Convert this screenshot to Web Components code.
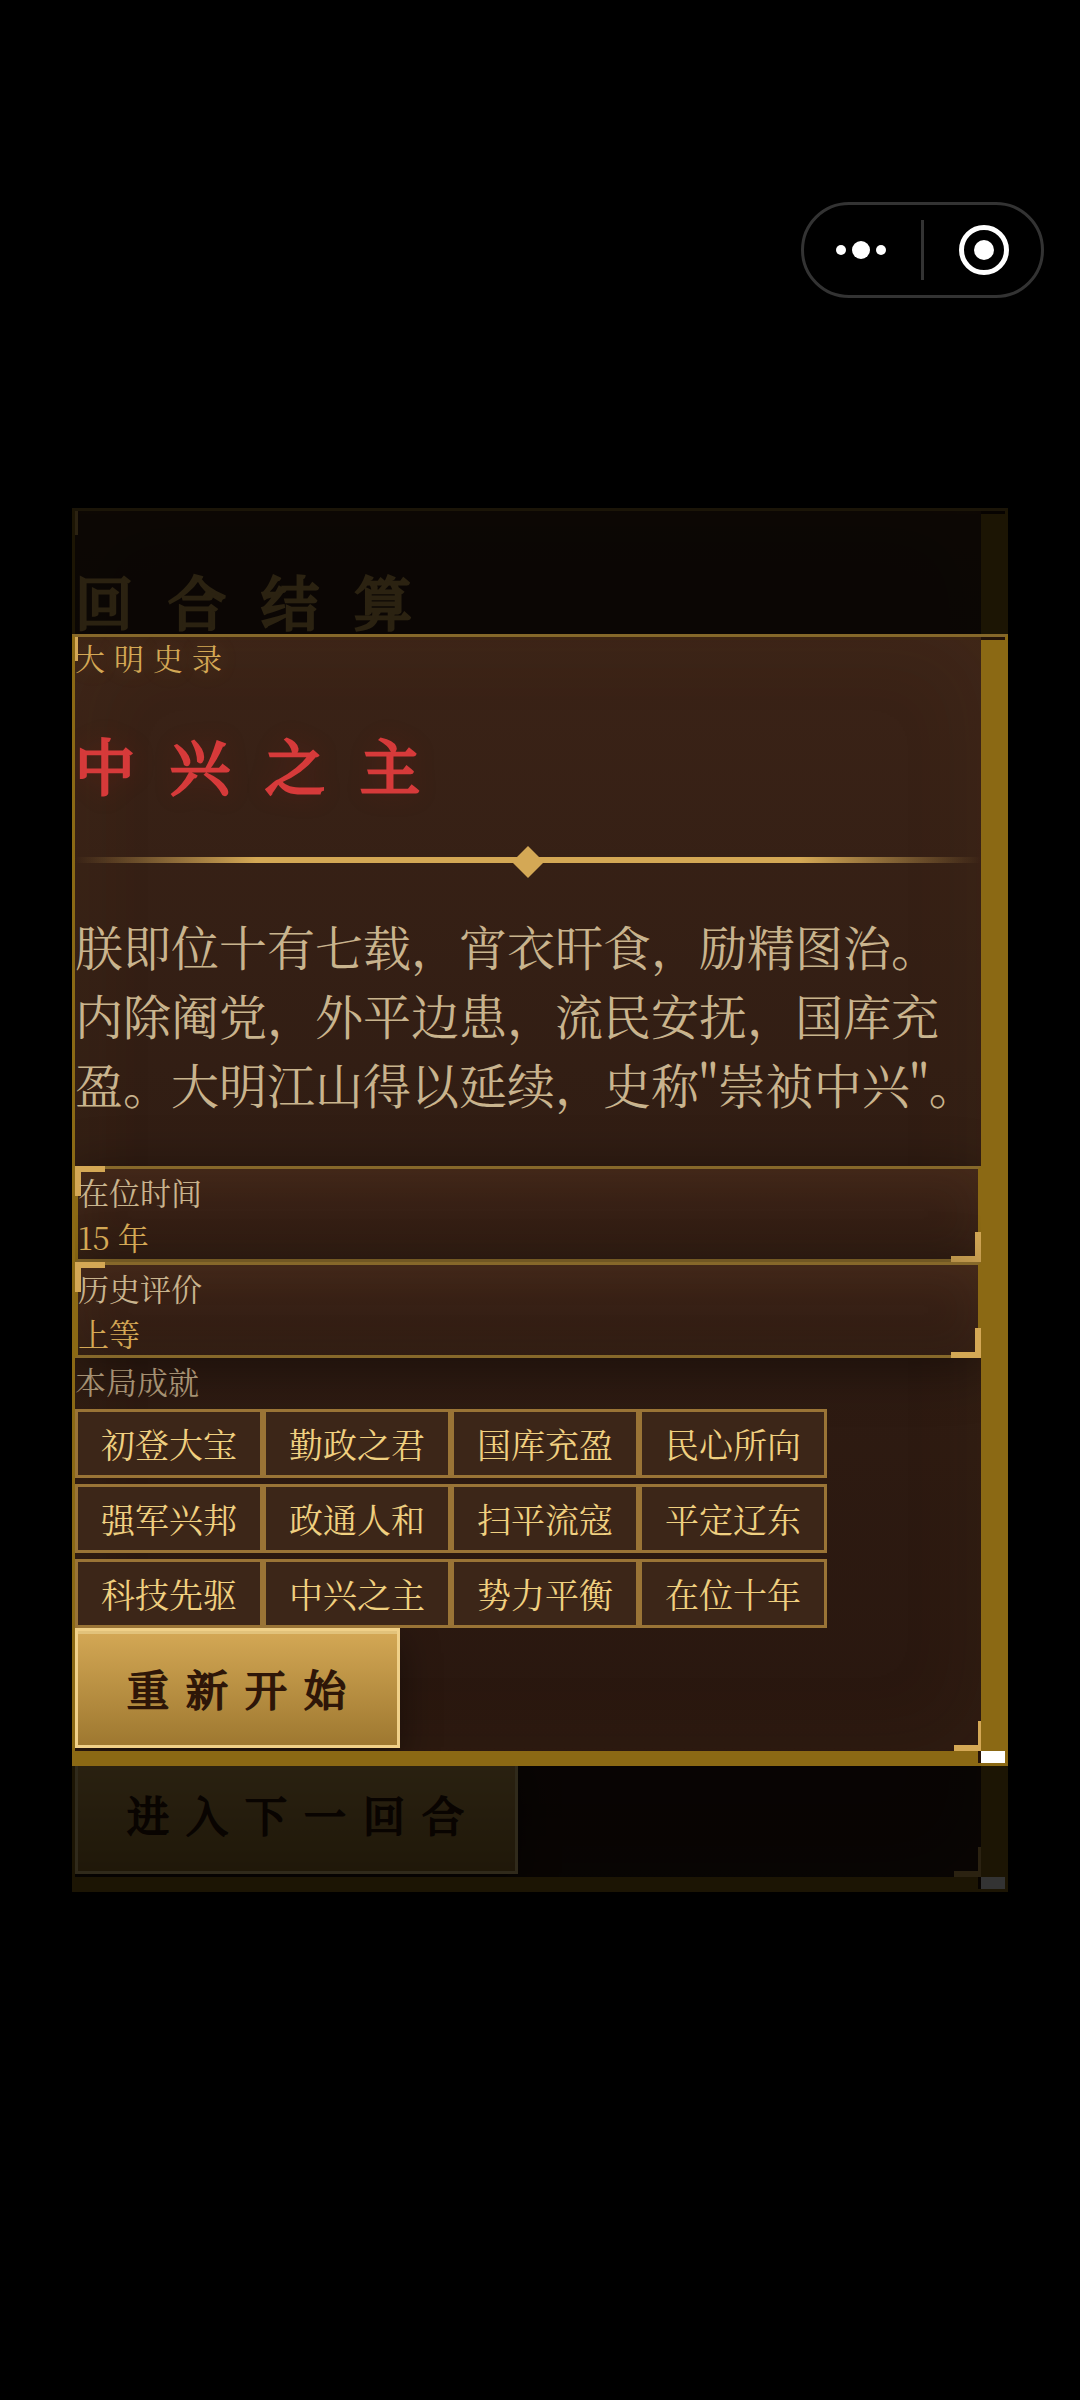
<!DOCTYPE html>
<html lang="zh-CN">
<head>
<meta charset="utf-8">
<meta name="viewport" content="width=device-width, initial-scale=1">
<title>大明史录</title>
<style>
  html { background: #000; }
  body {
    margin: 0;
    min-height: 100vh;
    background: #000;
    color: #c9b48e;
    font-family: "Noto Serif CJK SC", "Noto Serif SC", "Source Han Serif SC", "Noto Sans CJK SC", serif;
    font-weight: 400;
    --gold: #d4a855;
    --gold-light: #f0d080;
    --gold-dark: #8b6914;
  }
</style>
</head>
<body>
<host-capsule></host-capsule>

<modal-layer>
  <scroll-panel>
    <panel-title tone="plain">回合结算</panel-title>
    <ledger-body><gold-divider></gold-divider></ledger-body>
    <gold-button>进入下一回合</gold-button>
  </scroll-panel>
</modal-layer>

<modal-layer>
  <scroll-panel>
    <panel-eyebrow>大明史录</panel-eyebrow>
    <panel-title tone="red">中兴之主</panel-title>
    <gold-divider></gold-divider>
    <history-text>朕即位十有七载，宵衣旰食，励精图治。内除阉党，外平边患，流民安抚，国库充盈。大明江山得以延续，史称"崇祯中兴"。</history-text>
    <stat-card label="在位时间">15 年</stat-card>
    <stat-card label="历史评价">上等</stat-card>
    <achievement-list label="本局成就" items="初登大宝,勤政之君,国库充盈,民心所向,强军兴邦,政通人和,扫平流寇,平定辽东,科技先驱,中兴之主,势力平衡,在位十年"></achievement-list>
    <gold-button>重新开始</gold-button>
  </scroll-panel>
</modal-layer>

<script>
const define = (name, render) => customElements.define(name, class extends HTMLElement {
  connectedCallback() {
    if (this.shadowRoot) return;
    this.attachShadow({ mode: 'open' }).innerHTML = render(this);
  }
});

define('host-capsule', () => `
  <style>
    :host { display: flex; justify-content: flex-end; padding: 202px 36px 0; position: relative; z-index: 10; }
    nav { display: flex; align-items: center; box-sizing: border-box; width: 243px; height: 96px; border: 3px solid #333; border-radius: 48px; background: #000; }
    button { flex: 1; display: flex; align-items: center; justify-content: center; height: 90px; padding: 0 3px 0 0; border: 0; background: none; }
    i + button { padding: 0 0 0 3px; }
    i { width: 3px; height: 60px; background: #333; }
    svg { display: block; fill: #fff; }
  </style>
  <nav>
    <button aria-label="更多"><svg width="50" height="18" viewBox="0 0 50 18"><circle cx="5" cy="9" r="5"/><circle cx="25" cy="9" r="9"/><circle cx="45" cy="9" r="5"/></svg></button>
    <i></i>
    <button aria-label="关闭"><svg width="50" height="50" viewBox="0 0 50 50"><circle cx="25" cy="25" r="22.5" fill="none" stroke="#fff" stroke-width="5"/><circle cx="25" cy="25" r="10"/></svg></button>
  </nav>`);

define('modal-layer', () => `
  <style>
    :host { position: fixed; inset: 0; display: flex; align-items: center; justify-content: center; padding: 0 72px; background: rgba(0,0,0,.8); }
    ::slotted(*) { flex: 1; min-width: 0; }
  </style>
  <slot></slot>`);

define('scroll-panel', () => `
  <style>
    :host { display: block; }
    section { display: grid; grid-template-columns: 1fr 24px; grid-template-rows: auto 12px; border: 3px solid var(--gold-dark); border-top-color: #86682a; background: #241309; }
    .body { position: relative; display: flex; flex-direction: column; align-items: stretch; min-width: 0; padding-bottom: 3px; overflow: hidden;
      background: linear-gradient(180deg, rgba(59,35,23,.98), rgba(50,30,20,.98) 40%, rgba(41,23,15,.98)); box-shadow: inset 0 0 90px rgba(139,100,50,.08), inset 0 3px 0 rgba(62,38,20,.8); }
    .body::before { content: ""; position: absolute; left: 0; top: 0; width: 3px; height: 24px; background: var(--gold); }
    .body::after { content: ""; position: absolute; right: 0; bottom: 0; width: 24px; height: 24px; border: solid var(--gold); border-width: 0 3px 6px 0; }
    .v { margin-top: 3px; background: var(--gold-dark); }
    .h { margin-right: 3px; background: var(--gold-dark); }
    .c { background: #fff; }
  </style>
  <section role="dialog">
    <div class="body"><slot></slot></div><div class="v"></div>
    <div class="h"></div><div class="c"></div>
  </section>`);

define('panel-eyebrow', () => `
  <style>:host { display: block; font-size: 30px; line-height: 40px; padding-bottom: 3px; letter-spacing: 9px; color: var(--gold); text-shadow: 0 0 24px rgba(212,168,85,.2); }</style>
  <slot></slot>`);

define('panel-title', el => `
  <style>
    :host { display: block; }
    h2 { margin: 49px 0 58px; font-size: 58px; line-height: 70px; letter-spacing: 35px; font-weight: 400; color: var(--gold); -webkit-text-stroke: 3px currentColor; }
    h2.plain { margin-top: 54px; }
    h2.red { font-size: 60px; color: #d63a3a; text-shadow: 0 0 24px rgba(196,30,30,.35); }
  </style>
  <h2 class="${el.getAttribute('tone') || ''}"><slot></slot></h2>`);

define('ledger-body', () => `
  <style>
    :host { display: block; box-sizing: border-box; height: 1061px; padding-top: 78px; }
  </style>
  <slot></slot>`);

define('gold-divider', () => `
  <style>
    :host { display: flex; justify-content: center; align-items: center; height: 6px; background: linear-gradient(90deg, transparent, var(--gold) 20%, var(--gold) 80%, transparent); }
    svg { flex: none; display: block; fill: var(--gold); margin-top: 4px; }
  </style>
  <svg width="32" height="32" viewBox="0 0 32 32"><path d="M16 0 32 16 16 32 0 16z"/></svg>`);

define('history-text', () => `
  <style>
    :host { display: block; margin: 48px 0; }
    p { margin: 0; font-size: 48px; line-height: 69px; color: #c9b48e; }
  </style>
  <p><slot></slot></p>`);

define('stat-card', el => `
  <style>
    :host { display: block; position: relative; border: 3px solid var(--gold-dark); border-top-color: #86682a; border-bottom-color: #86682a;
      background: linear-gradient(180deg, #3f2518, #2e1b12); box-shadow: 0 9px 54px rgba(0,0,0,.45), inset 0 0 45px rgba(139,100,50,.1); }
    :host::before, :host::after { content: ""; position: absolute; width: 24px; height: 24px; border: solid var(--gold); }
    :host::before { left: -3px; top: -3px; border-width: 6px 0 0 6px; }
    :host::after { right: -3px; bottom: -3px; border-width: 0 6px 6px 0; }
    dl { margin: 0; font-size: 31px; line-height: 45px; position: relative; z-index: 1; }
    dt { color: #c9b48e; }
    dd { margin: 0; color: var(--gold); }
  </style>
  <dl><dt>${el.getAttribute('label')}</dt><dd><slot></slot></dd></dl>`);

define('achievement-list', el => `
  <style>
    :host { display: block; position: relative; }
    h3 { margin: 0 0 6px; font-size: 31px; line-height: 45px; font-weight: inherit; color: #a59173; }
    ul { display: flex; flex-wrap: wrap; row-gap: 6px; margin: 0 140px 0 0; padding: 0; list-style: none; }
    li { box-sizing: border-box; height: 69px; padding: 0 23px; border: 3px solid #9a7436; background: #3c2618; font-size: 34px; line-height: 63px; color: var(--gold-light); }
  </style>
  <h3>${el.getAttribute('label')}</h3>
  <ul>${el.getAttribute('items').split(',').map(t => `<li>${t}</li>`).join('')}</ul>`);

define('gold-button', () => `
  <style>
    :host { display: flex; }
    button { box-sizing: border-box; height: 120px; padding: 0 34px 0 49px; border: 3px solid #f0d088; border-radius: 0;
      background: linear-gradient(180deg, #d4a855, #9e7830); box-shadow: inset 0 3px 0 #e2c27a, 0 12px 36px rgba(0,0,0,.4);
      font: inherit; font-size: 42px; line-height: 60px; letter-spacing: 17px; color: #2e1608; -webkit-text-stroke: 2px currentColor; }
  </style>
  <button><slot></slot></button>`);
</script>
</body>
</html>
